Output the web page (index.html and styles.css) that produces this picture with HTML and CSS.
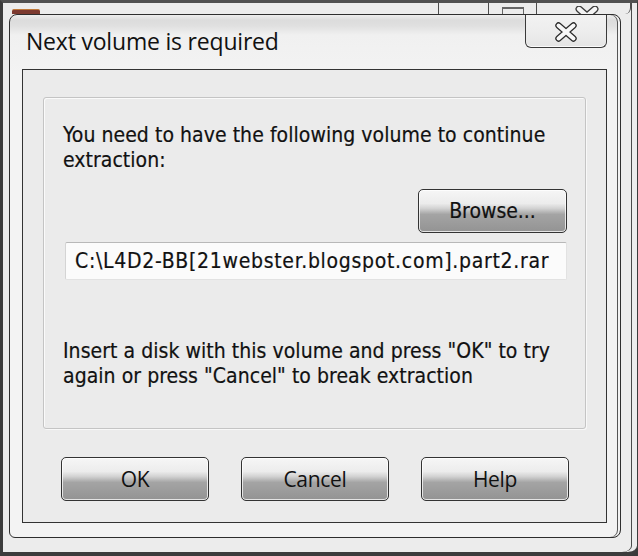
FILE: index.html
```
<!DOCTYPE html>
<html>
<head>
<meta charset="utf-8">
<link rel="stylesheet" href="styles.css">
</head>
<body>
<div class="desk">
  <div class="backwin">
    <div class="back-head">
      <div class="app-icon"></div>
      <div class="back-caps">
        <div class="cap cap-min"></div>
        <div class="cap cap-max"><span class="max-glyph"></span></div>
        <div class="cap cap-close">
          <svg class="back-x" width="24" height="20" viewBox="0 0 24 20">
            <path d="M4 3 L20 17 M20 3 L4 17" stroke="#3a3a3a" stroke-width="7" stroke-linecap="round" fill="none"/>
            <path d="M4 3 L20 17 M20 3 L4 17" stroke="#f4f4f4" stroke-width="4.4" stroke-linecap="round" fill="none"/>
          </svg>
        </div>
      </div>
    </div>
  </div>

  <div class="dialog">
    <div class="titlebar">
      <span class="title">Next volume is required</span>
      <div class="close-btn">
        <svg width="24" height="20" viewBox="0 0 24 20">
          <path d="M4.5 3.5 L19.5 16.5 M19.5 3.5 L4.5 16.5" stroke="#2a2a2a" stroke-width="6.4" stroke-linecap="round" fill="none"/>
          <path d="M4.5 3.5 L19.5 16.5 M19.5 3.5 L4.5 16.5" stroke="#f7f7f7" stroke-width="4" stroke-linecap="round" fill="none"/>
        </svg>
      </div>
    </div>
    <div class="client">
      <div class="group">
        <p class="msg msg-top">You need to have the following volume to continue<br>extraction:</p>
        <div class="browse-row">
          <div class="btn btn-browse">Browse...</div>
        </div>
        <div class="path-field">C:\L4D2-BB[21webster.blogspot.com].part2.rar</div>
        <p class="msg msg-bottom">Insert a disk with this volume and press "OK" to try<br>again or press "Cancel" to break extraction</p>
      </div>
      <div class="actions">
        <div class="btn btn-action">OK</div>
        <div class="btn btn-action">Cancel</div>
        <div class="btn btn-action">Help</div>
      </div>
    </div>
  </div>
</div>
</body>
</html>
```
FILE: styles.css
```
html, body {
  margin: 0;
  padding: 0;
  background: #3a3a3a;
}

.desk {
  position: relative;
  width: 638px;
  height: 556px;
  overflow: hidden;
  background: #3a3a3a;
}

.backwin {
  position: absolute;
  left: 0;
  top: 0;
  width: 638px;
  height: 556px;
  box-sizing: border-box;
  border-top: 3px solid #505050;
  border-left: 3px solid #3c3c3c;
  border-bottom: 4px solid #3c3c3c;
  border-right: 1px solid #3c3c3c;
  border-bottom-right-radius: 10px;
  background: #ececec;
  box-shadow: inset -5px 0 0 #ececec, inset -6px 0 0 #4a4a4a;
}

.back-head {
  display: flex;
  height: 11px;
  align-items: flex-end;
}

.app-icon {
  margin-left: 9px;
  width: 28px;
  height: 5px;
  background: #7c3a30;
  border-top: 1px solid #c07a3a;
  border-radius: 2px 2px 0 0;
  box-sizing: border-box;
}

.back-caps {
  display: flex;
  margin-left: auto;
  height: 11px;
  margin-right: 6px;
}

.cap {
  height: 11px;
  border-left: 1px solid #4c4c4c;
  box-sizing: border-box;
  position: relative;
}

.cap-min { width: 50px; }
.cap-max { width: 48px; }
.cap-close {
  width: 95px;
  border-right: 1px solid #4c4c4c;
  border-radius: 0 0 6px 0;
}

.max-glyph {
  position: absolute;
  left: 13px;
  top: 4px;
  width: 22px;
  height: 10px;
  box-sizing: border-box;
  border: 1px solid #666;
  border-top-width: 2px;
}

.back-x {
  position: absolute;
  left: 38px;
  top: 3px;
}

.dialog {
  position: absolute;
  left: 9px;
  top: 14px;
  width: 612px;
  height: 524px;
  box-sizing: border-box;
  border: 1px solid #2e2e2e;
  border-radius: 8px 8px 8px 6px;
  background: linear-gradient(to bottom, #eeeeee 0px, #dcdcdc 5px, #e0e0e0 11px, #f0f0f0 20px, #f3f3f3 60px, #f3f3f3 100%);
  box-shadow: inset -2px 0 0 #f3f3f3, inset -3px 0 0 #555;
  display: flex;
  flex-direction: column;
}

.titlebar {
  position: relative;
  height: 54px;
  flex: none;
}

.title {
  display: block;
  padding: 11px 0 0 16px;
  font-family: "Open Sans", "Noto Sans", sans-serif;
  font-size: 23px;
  line-height: 31px;
  color: #111;
  letter-spacing: -0.2px;
}

.close-btn {
  position: absolute;
  right: 13px;
  top: 0;
  width: 82px;
  height: 33px;
  box-sizing: border-box;
  border: 1px solid #3a3a3a;
  border-top: none;
  border-radius: 0 0 6px 6px;
  background: linear-gradient(to bottom, #f2f2f2, #ececec 60%, #e4e4e4);
  box-shadow: inset 0 -1px 0 #fafafa;
  display: flex;
  align-items: center;
  justify-content: center;
}

.close-btn svg {
  margin-top: 1px;
}

.client {
  margin: 0 13px 0 12px;
  height: 454px;
  box-sizing: border-box;
  border: 1px solid #333;
  background: #ebebeb;
  padding: 27px 20px 0 20px;
}

.group {
  height: 332px;
  box-sizing: border-box;
  border: 1px solid #c4c4c4;
  border-radius: 3px;
  box-shadow: inset 1px 1px 0 #fafafa, 1px 1px 0 #f8f8f8;
  padding: 25px 18px 0 19px;
  display: flex;
  flex-direction: column;
}

.msg {
  margin: 0;
  font-family: "DejaVu Sans Condensed", "DejaVu Sans", sans-serif;
  font-size: 21px;
  line-height: 25px;
  letter-spacing: 0.05px;
  color: #111;
  -webkit-text-stroke: 0.2px #111;
}

.browse-row {
  display: flex;
  justify-content: flex-end;
  margin-top: 16px;
}

.btn {
  box-sizing: border-box;
  height: 44px;
  border: 1px solid #333;
  border-radius: 5px;
  background: linear-gradient(to bottom, #f6f6f6 0%, #ececec 32%, #d2d2d2 44%, #a4a4a4 58%, #939393 100%);
  box-shadow: inset 0 0 0 1px rgba(255,255,255,0.75);
  display: flex;
  align-items: center;
  justify-content: center;
  color: #111;
}

.btn-browse {
  width: 149px;
  font-family: "DejaVu Sans Condensed", "DejaVu Sans", sans-serif;
  font-size: 21px;
  -webkit-text-stroke: 0.2px #111;
}

.path-field {
  margin: 9px 0 0 2px;
  height: 38px;
  box-sizing: border-box;
  border: 1px solid #e2e2e2;
  border-top-color: #b8b8b8;
  border-left-color: #d4d4d4;
  border-radius: 2px;
  background: #fbfbfb;
  padding: 2px 0 0 9px;
  font-family: "DejaVu Sans Condensed", "DejaVu Sans", sans-serif;
  font-size: 21px;
  line-height: 32px;
  letter-spacing: 0.7px;
  color: #111;
  -webkit-text-stroke: 0.2px #111;
  white-space: nowrap;
}

.msg-bottom {
  margin-top: 59px;
}

.actions {
  display: flex;
  gap: 32px;
  margin-top: 28px;
  padding-left: 18px;
}

.btn-action {
  width: 148px;
  font-family: "Open Sans", "Noto Sans", sans-serif;
  font-size: 21px;
  letter-spacing: -0.3px;
}
```
